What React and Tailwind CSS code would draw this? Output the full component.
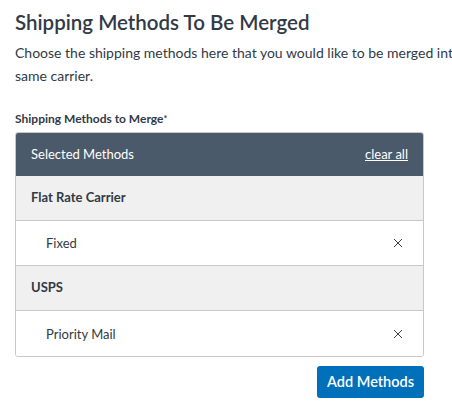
import React from "react";

function XIcon() {
  return (
    <svg width="10" height="10" viewBox="0 0 10 10" className="text-[#3a3f47]">
      <path d="M1 1L9 9M9 1L1 9" stroke="currentColor" strokeWidth="1" fill="none" />
    </svg>
  );
}

function Group({ name }) {
  return (
    <div className="h-[45px] flex items-center px-[15px] bg-[#f0f0f0] border-b border-[#c8c8c8] text-[13px] font-bold text-[#313a44]">
      {name}
    </div>
  );
}

function Item({ name, last }) {
  return (
    <div className={"h-[45px] flex items-center justify-between pl-[30px] pr-[20px] bg-white text-[13px] text-[#313a44] " + (last ? "" : "border-b border-[#c8c8c8]")}>
      <span className="pt-[2px]">{name}</span>
      <XIcon />
    </div>
  );
}

export default function App() {
  return (
    <div className="w-[452px] h-[415px] overflow-hidden bg-white font-['Lato',sans-serif]">
      <div className="w-[480px] pl-[15px] pt-[9px]">
        <h1 className="text-[20.5px] leading-[26px] font-semibold text-[#313a46]">Shipping Methods To Be Merged</h1>
        <p className="mt-[6px] text-[14px] leading-[23px] text-[#313a46] w-[470px]">
          Choose the shipping methods here that you would like to be merged into the same carrier.
        </p>
      </div>
      <div className="px-[15px] w-[452px]">
        <div className="mt-[24px] text-[12px] font-bold text-[#313a46] leading-[16px]">
          Shipping Methods to Merge<span className="text-[9px] align-top">*</span>
        </div>
        <div className="mt-[5px] w-[409px] border border-[#c8c8c8] rounded-[3px] overflow-hidden">
          <div className="h-[43px] bg-[#4b5a6a] flex items-center justify-between px-[15px] text-white text-[13px]">
            <span>Selected Methods</span>
            <span className="underline">clear all</span>
          </div>
          <Group name="Flat Rate Carrier" />
          <Item name="Fixed" />
          <Group name="USPS" />
          <Item name="Priority Mail" last />
        </div>
        <div className="w-[409px] flex justify-end mt-[9px]">
          <button className="h-[32px] px-[10px] bg-[#0070ba] text-white text-[14.5px] font-semibold rounded-[3px]">
            Add Methods
          </button>
        </div>
      </div>
    </div>
  );
}
